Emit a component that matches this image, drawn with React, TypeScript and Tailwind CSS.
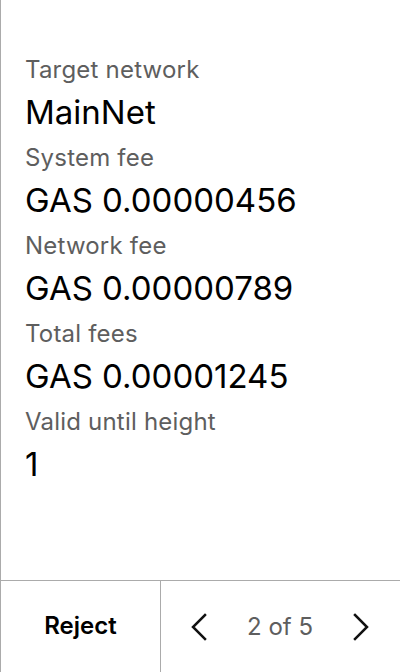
const rows = [
  { label: "Target network", value: "MainNet" },
  { label: "System fee", value: "GAS 0.00000456" },
  { label: "Network fee", value: "GAS 0.00000789" },
  { label: "Total fees", value: "GAS 0.00001245" },
  { label: "Valid until height", value: "1" },
];

const Chevron = ({ dir }: { dir: "left" | "right" }) => (
  <svg width="16" height="28" viewBox="0 0 16 28" fill="none" stroke="#111" strokeWidth="2.5" strokeLinecap="square">
    <path d={dir === "left" ? "M14 2 L2 14 L14 26" : "M2 2 L14 14 L2 26"} />
  </svg>
);

export default function App() {
  return (
    <div className="flex h-[672px] w-[400px] flex-col border-l border-[#ababab] bg-white font-['Inter',sans-serif] text-black">
      <div className="flex-1 px-6 pt-[54px]">
        {rows.map((r) => (
          <div key={r.label} className="mb-[6px]">
            <div className="text-[24px] leading-8 tracking-[0.2px] text-[#5e5e5e]">{r.label}</div>
            <div className="mt-[2px] text-[33px] leading-[48px]">{r.value}</div>
          </div>
        ))}
      </div>
      <div className="flex h-[92px] border-t border-[#ababab]">
        <button className="w-[160px] border-r border-[#ababab] pb-[2px] text-[24px] font-semibold">Reject</button>
        <div className="flex flex-1 items-center justify-between pl-[30px] pr-[31px]">
          <Chevron dir="left" />
          <span className="text-[24px] text-[#5e5e5e]">2 of 5</span>
          <Chevron dir="right" />
        </div>
      </div>
    </div>
  );
}
